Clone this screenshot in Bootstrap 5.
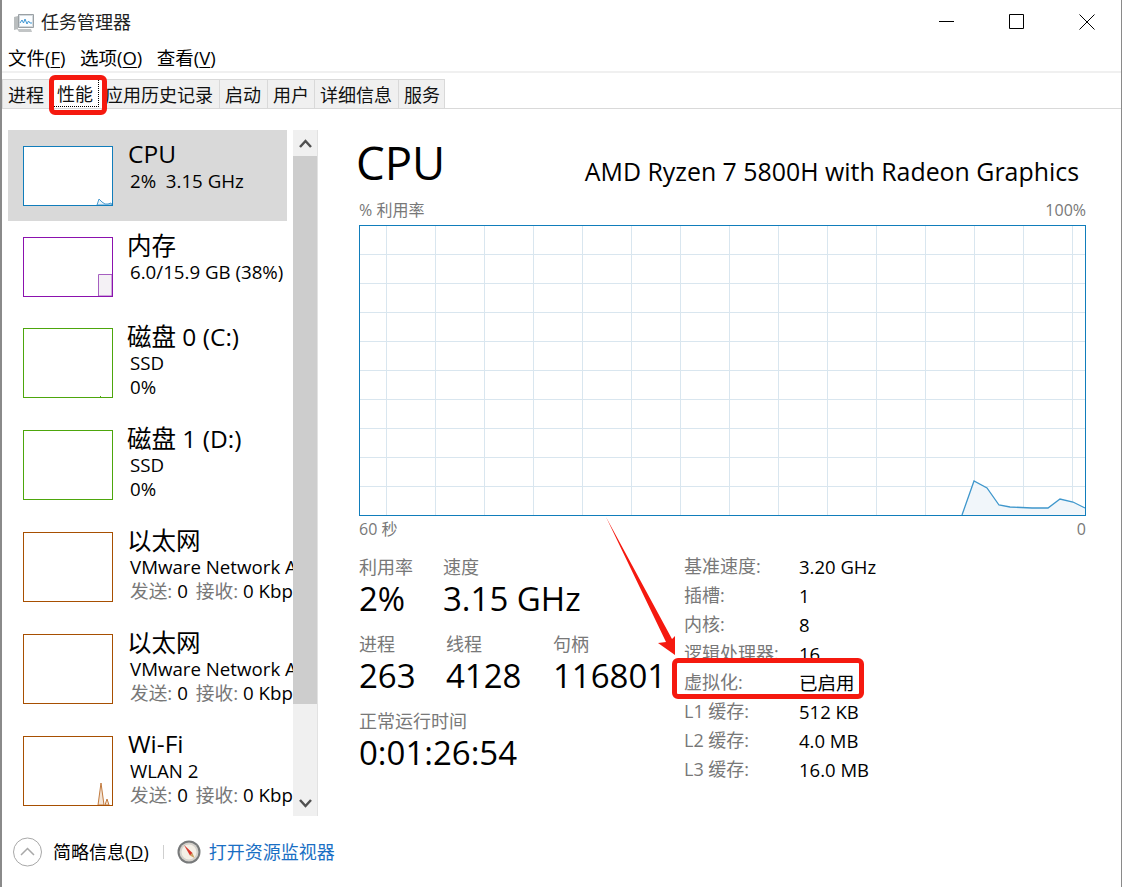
<!DOCTYPE html>
<html lang="zh-CN">
<head>
  <meta charset="utf-8">
  <title>任务管理器</title>
  <link href="https://cdn.jsdelivr.net/npm/bootstrap@5.3.0/dist/css/bootstrap.min.css" rel="stylesheet">
  <style>
    body { width: 1123px; height: 887px; overflow: hidden; background: #fff; color: #000; font-family: "Open Sans", "Noto Sans CJK SC", sans-serif; font-size: 18px; line-height: 24px; }
    .tm-window { width: 1122px; height: 887px; border-left: 2px solid #8a8a8a; border-right: 1px solid #8a8a8a; }
    .tm-title { height: 44px; padding-left: 11px; }
    .tm-title span { margin-left: 7px; color: #222; }
    .tm-winbtns { margin-left: auto; gap: 54px; padding-right: 26px; }
    .tm-menu { height: 29px; padding-left: 6px; gap: 14.5px; border-bottom: 2px solid #f0f0f0; font-size: 18.5px; }
    .tm-menu u { text-underline-offset: 2px; }
    .tm-tabs { height: 36px; padding: 6px 0 0 0; border-bottom: 1px solid #d9d9d9; }
    .tm-tab { height: 29px; padding: 0 6px 0 5px; background: #f0f0f0; border: 1px solid #d9d9d9; border-bottom: 0; margin-right: -1px; color: #111; line-height: 30px; }
    .tm-tab-on { position: relative; background: #fff; border: 0; margin: 0; padding: 0 6px 0 7px; width: 52px; }
    .tm-tab-on::before { content: ""; position: absolute; left: 3px; right: 3px; top: 0; bottom: 1px; border: 1px dotted #000; }
    .tm-tab-on::after { content: ""; position: absolute; left: -1px; right: -5px; top: -4px; bottom: -7px; border: 5px solid #f5190f; border-radius: 6px; }
    .tm-tab-hist { padding: 0 6px 0 2px; }
    .tm-tab-tight { margin-right: -2px; }
    .tm-tab-last { padding: 0 4px 0 5px; }
    .tm-main { height: 708px; }
    .tm-side { width: 285px; height: 686px; margin: 21px 0 0 6px; overflow: hidden; }
    .tm-item { height: 102px; width: 279px; padding: 16px 0 0 15px; gap: 15px; white-space: nowrap; }
    .tm-item-s { height: 91px; }
    .tm-item-on { background: #d9d9d9; }
    .tm-thumb { flex: none; width: 90px; height: 70px; background: #fff; border: 1px solid; }
    .tm-item-s .tm-thumb { height: 60px; }
    .tm-thumb svg { display: block; width: 88px; height: 100%; }
    .tm-blue { border-color: #117dbb; }
    .tm-purple { border-color: #8b12ae; }
    .tm-green { border-color: #4da60c; }
    .tm-brown { border-color: #a74f01; }
    .tm-name { font-size: 24.5px; line-height: 28px; margin-top: -6px; }
    .tm-name-zh { padding-top: 1px; margin-bottom: -1px; margin-left: -1px; }
    .tm-sub { font-size: 18.7px; line-height: 24px; margin-top: 1px; padding-left: 2px; }
    .tm-sub + .tm-sub { margin-top: 0; }
    .tm-grey { color: #787878; }
    .tm-scroll { width: 25px; height: 686px; margin-top: 21px; background: #f0f0f0; border-right: 1px solid #e2e2e2; }
    .tm-arrow { height: 26px; }
    .tm-thumbbar { height: 548px; background: #cdcdcd; }
    .tm-panel { width: 729px; margin: 21px 0 0 39px; }
    .tm-bigtitle { height: 71px; }
    .tm-bigtitle b { font-weight: 400; font-size: 45.500px; line-height: 64px; margin-left: -1px; }
    .tm-bigtitle span { font-size: 24.900px; margin-left: auto; line-height: 38px; padding: 22px 7px 0 0; }
    .tm-smalls { font-size: 16px; line-height: 18px; color: #787878; padding-left: 2px; height: 24px; }
    .tm-chart { display: block; width: 727px; height: 291px; margin-left: 2px; }
    .tm-axis { height: 39px; line-height: 26px; }
    .tm-stats { margin-left: 2px; }
    .tm-left { width: 325px; }
    .tm-block { height: 77px; }
    .tm-block label { display: block; color: #787878; line-height: 24px; }
    .tm-val { font-size: 33px; line-height: 40px; }
    .tm-wa { width: 84px; } .tm-wb { width: 87px; } .tm-wc { width: 107px; }
    .tm-facts { margin-top: -3px; font-size: 18.5px; }
    .tm-fact { height: 29px; line-height: 29px; }
    .tm-fact label { width: 115px; color: #787878; font-size: 18px; }
    .tm-fact-box { position: relative; z-index: 1; }
    .tm-fact-box::before { content: ""; position: absolute; left: -12px; width: 192px; top: -10px; height: 41px; background: #fff; border: 5px solid #f5190f; border-radius: 6px; z-index: -1; }
    .tm-foot { height: 71px; padding-left: 11px; padding-bottom: 1px; }
    .tm-foot-label { margin-left: 10px; }
    .tm-foot-sep { width: 1px; height: 14px; background: #cfcfcf; margin: 0 13px 0 14px; }
    .tm-link { color: #1a6fc4; text-decoration: none; margin-left: 8px; }
    .tm-mark { position: absolute; left: 0; top: 0; pointer-events: none; }
  </style>
</head>
<body>
  <div class="tm-window">
    <div class="tm-title d-flex align-items-center">
      <svg width="21" height="21" viewBox="0 0 21 21">
        <path d="M1 5l4-1v13l-4 1z" fill="#b9bdbe"/>
        <path d="M5.500 2.500h15v13h-15z" fill="#d4dade" stroke="#9aa0a4"/>
        <path d="M7 4h12v10H7z" fill="#fbfdff"/>
        <path d="M7 11l2-3 1.500 3 1.500-4 2 5 1.500-3 1.500 2h2" fill="none" stroke="#3f97d4"/>
        <path d="M4 17h14l1 3H6z" fill="#c2c5c6"/>
      </svg>
      <span>任务管理器</span>
      <div class="tm-winbtns d-flex align-items-center">
        <svg width="16" height="16"><path d="M0 7.500h15" stroke="#000"/></svg>
        <svg width="16" height="16"><path d="M.5.5h14v14H.5z" fill="none" stroke="#000"/></svg>
        <svg width="16" height="16"><path d="M.5.5l15 15M15.500 .5l-15 15" stroke="#000"/></svg>
      </div>
    </div>
    <div class="tm-menu d-flex align-items-center">
      <span>文件(<u>F</u>)</span><span>选项(<u>O</u>)</span><span>查看(<u>V</u>)</span>
    </div>
    <div class="tm-tabs d-flex">
      <div class="tm-tab">进程</div>
      <div class="tm-tab tm-tab-on">性能</div>
      <div class="tm-tab tm-tab-hist">应用历史记录</div>
      <div class="tm-tab">启动</div>
      <div class="tm-tab tm-tab-tight">用户</div>
      <div class="tm-tab">详细信息</div>
      <div class="tm-tab tm-tab-last">服务</div>
    </div>
    <div class="tm-main d-flex">
      <div class="tm-side">
        <div class="tm-item tm-item-s tm-item-on d-flex">
          <div class="tm-thumb tm-blue"><svg viewBox="0 0 88 58" preserveAspectRatio="none"><path d="M73 58l2-6 3 3 3 2 3 0 3-1 1 2z" fill="#e8f2f8" stroke="#4a9bd0"/></svg></div>
          <div><div class="tm-name">CPU</div><div class="tm-sub">2%&nbsp; 3.15 GHz</div></div>
        </div>
        <div class="tm-item tm-item-s d-flex">
          <div class="tm-thumb tm-purple"><svg viewBox="0 0 88 58" preserveAspectRatio="none"><path d="M74.500 58V36.500H88V58z" fill="#f4f1f5" stroke="#a65fc0"/></svg></div>
          <div><div class="tm-name tm-name-zh">内存</div><div class="tm-sub">6.0/15.9 GB (38%)</div></div>
        </div>
        <div class="tm-item d-flex">
          <div class="tm-thumb tm-green"><svg viewBox="0 0 88 68" preserveAspectRatio="none"><path d="M76 68v-1h1v1z" fill="#4da60c"/></svg></div>
          <div><div class="tm-name tm-name-zh">磁盘 0 (C:)</div><div class="tm-sub">SSD</div><div class="tm-sub">0%</div></div>
        </div>
        <div class="tm-item d-flex">
          <div class="tm-thumb tm-green"></div>
          <div><div class="tm-name tm-name-zh">磁盘 1 (D:)</div><div class="tm-sub">SSD</div><div class="tm-sub">0%</div></div>
        </div>
        <div class="tm-item d-flex">
          <div class="tm-thumb tm-brown"></div>
          <div><div class="tm-name tm-name-zh">以太网</div><div class="tm-sub">VMware Network Adapter</div><div class="tm-sub"><span class="tm-grey">发送:</span> 0<span class="tm-grey ms-2">接收:</span> 0 Kbps</div></div>
        </div>
        <div class="tm-item d-flex">
          <div class="tm-thumb tm-brown"></div>
          <div><div class="tm-name tm-name-zh">以太网</div><div class="tm-sub">VMware Network Adapter</div><div class="tm-sub"><span class="tm-grey">发送:</span> 0<span class="tm-grey ms-2">接收:</span> 0 Kbps</div></div>
        </div>
        <div class="tm-item d-flex">
          <div class="tm-thumb tm-brown"><svg viewBox="0 0 88 68" preserveAspectRatio="none"><path d="M74 68l3-22 3 22zM81 68l2-6 2 6z" fill="#f3e4d6" stroke="#c17a3e"/></svg></div>
          <div><div class="tm-name">Wi-Fi</div><div class="tm-sub">WLAN 2</div><div class="tm-sub"><span class="tm-grey">发送:</span> 0<span class="tm-grey ms-2">接收:</span> 0 Kbps</div></div>
        </div>
      </div>
      <div class="tm-scroll d-flex flex-column">
        <div class="tm-arrow d-flex align-items-center justify-content-center"><svg width="13" height="9"><path d="M1 8l5.500-6L12 8" fill="none" stroke="#505050" stroke-width="2.500"/></svg></div>
        <div class="tm-thumbbar"></div>
        <div class="flex-grow-1 d-flex align-items-end justify-content-center pb-2"><svg width="13" height="9"><path d="M1 1l5.500 6L12 1" fill="none" stroke="#505050" stroke-width="2.500"/></svg></div>
      </div>
      <div class="tm-panel">
        <div class="tm-bigtitle d-flex align-items-start"><b>CPU</b><span>AMD Ryzen 7 5800H with Radeon Graphics</span></div>
        <div class="tm-smalls d-flex justify-content-between"><span>% 利用率</span><span>100%</span></div>
        <svg class="tm-chart" id="cpuChart" viewBox="0 0 727 291"></svg>
        <div class="tm-smalls tm-axis d-flex justify-content-between"><span>60 秒</span><span>0</span></div>
        <div class="tm-stats d-flex">
          <div class="tm-left">
            <div class="tm-block d-flex">
              <div class="tm-wa"><label>利用率</label><div class="tm-val">2%</div></div>
              <div><label>速度</label><div class="tm-val">3.15 GHz</div></div>
            </div>
            <div class="tm-block d-flex">
              <div class="tm-wb"><label>进程</label><div class="tm-val">263</div></div>
              <div class="tm-wc"><label>线程</label><div class="tm-val">4128</div></div>
              <div><label>句柄</label><div class="tm-val">116801</div></div>
            </div>
            <div class="tm-block"><label>正常运行时间</label><div class="tm-val">0:01:26:54</div></div>
          </div>
          <div class="tm-facts d-flex flex-column">
            <div class="tm-fact d-flex"><label>基准速度:</label><span>3.20 GHz</span></div>
            <div class="tm-fact d-flex"><label>插槽:</label><span>1</span></div>
            <div class="tm-fact d-flex"><label>内核:</label><span>8</span></div>
            <div class="tm-fact d-flex"><label>逻辑处理器:</label><span>16</span></div>
            <div class="tm-fact tm-fact-box d-flex"><label>虚拟化:</label><span>已启用</span></div>
            <div class="tm-fact d-flex"><label>L1 缓存:</label><span>512 KB</span></div>
            <div class="tm-fact d-flex"><label>L2 缓存:</label><span>4.0 MB</span></div>
            <div class="tm-fact d-flex"><label>L3 缓存:</label><span>16.0 MB</span></div>
          </div>
        </div>
      </div>
    </div>
    <div class="tm-foot d-flex align-items-center">
      <svg width="30" height="30"><circle cx="14.500" cy="15" r="14" fill="#fff" stroke="#a8a8a8"/><path d="M8 18l6.500-6.500L21 18" fill="none" stroke="#a8a8a8" stroke-width="1.500"/></svg>
      <span class="tm-foot-label">简略信息(<u>D</u>)</span>
      <span class="tm-foot-sep"></span>
      <svg width="24" height="24" viewBox="0 0 24 24"><circle cx="12" cy="12" r="11.500" fill="#77797a"/><circle cx="12" cy="12" r="9.500" fill="#d5d2cc"/><circle cx="12" cy="12" r="7.500" fill="#f4efe6"/><path d="M7 5l8.500 8-2.500 2.500z" fill="#d8352a"/><path d="M13 15.500l2.500-2.500 2 5z" fill="#c9a060"/></svg>
      <a class="tm-link" href="#">打开资源监视器</a>
    </div>
  </div>
  <svg class="tm-mark" width="1123" height="887"><path d="M606 517L672 639l3-3 0 19-17-12 8-1z" fill="#f5190f"/></svg>
  <script>
    // draw the grid and the load curve of the big chart
    var parts = [];
    for (var x = 27; x < 727; x += 49) parts.push('<path d="M' + (x + .5) + ' 0V291" stroke="#d9e6ef"/>');
    for (var y = 29; y < 290; y += 29) parts.push('<path d="M0 ' + (y + .5) + 'H727" stroke="#d9e6ef"/>');
    var pts = "603,290 615,256 628,263 640,280 651,282 673,283 689,283 701,274 714,277 726,283";
    parts.push('<polygon points="' + pts + ' 726,290" fill="#f1f6fa"/>');
    parts.push('<polyline points="' + pts + '" fill="none" stroke="#3f97cc" stroke-width="1.300"/>');
    parts.push('<rect x=".5" y=".5" width="726" height="290" fill="none" stroke="#117dbb"/>');
    document.getElementById("cpuChart").innerHTML = parts.join("");
  </script>
  <script src="https://cdn.jsdelivr.net/npm/bootstrap@5.3.0/dist/js/bootstrap.bundle.min.js"></script>
</body>
</html>
